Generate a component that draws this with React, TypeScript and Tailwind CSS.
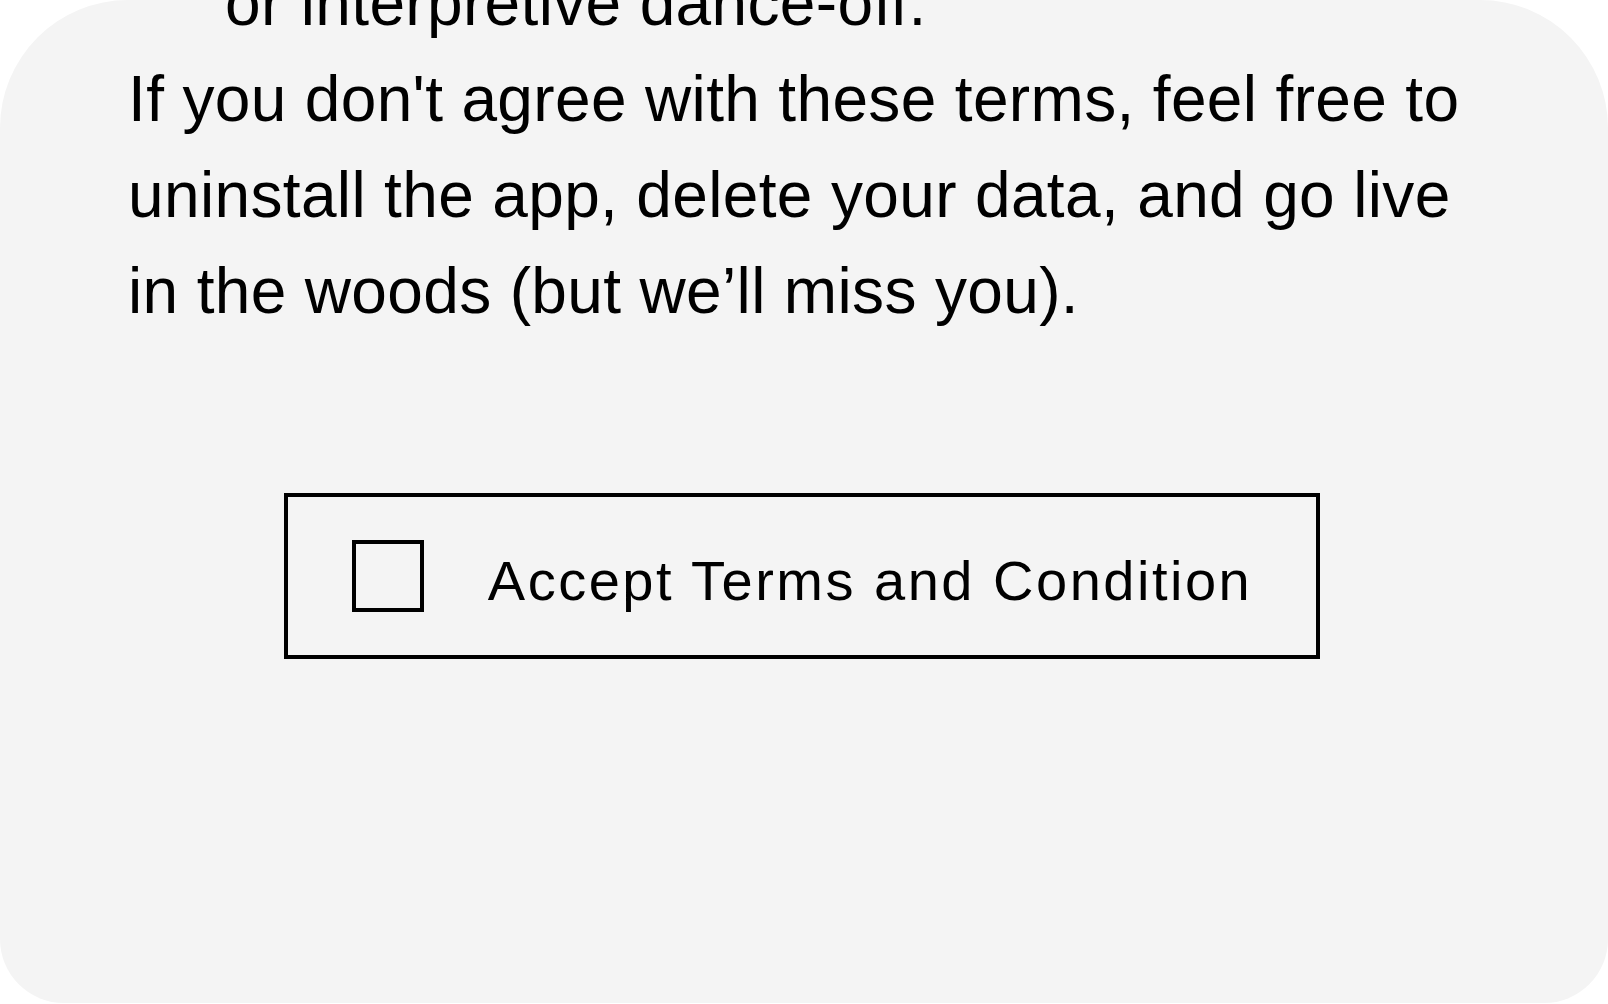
import { useState } from "react";

export default function App() {
  const [accepted, setAccepted] = useState(false);
  return (
    <div className="min-h-screen bg-white">
      {/* terms card, scrolled to the end */}
      <div className="h-[1003px] overflow-hidden rounded-t-[128px] rounded-b-[64px] bg-[#f4f4f4] px-[128px] font-['Liberation_Sans',Arial,sans-serif] text-black">
        <ul className="-mt-[45px] pl-[97px] text-[64px] leading-[96px] tracking-[0.35px]">
          <li>or interpretive dance-off.</li>
        </ul>
        <p className="text-[64px] leading-[96px] tracking-[0.35px]">
          If you don't agree with these terms, feel free to uninstall the app, delete your data,
          and go live in the woods (but we’ll miss you).
        </p>

        <div className="mt-[154px] flex justify-center pr-[4px]">
          <label className="flex h-[166px] cursor-pointer items-center gap-[64px] border-4 border-black px-[64px]">
            <input
              type="checkbox"
              checked={accepted}
              onChange={(e) => setAccepted(e.target.checked)}
              className="h-[72px] w-[72px] shrink-0 appearance-none border-4 border-black bg-transparent checked:bg-black"
            />
            <span className="mt-[9px] text-[56px] leading-none tracking-[2.5px]">
              Accept Terms and Condition
            </span>
          </label>
        </div>
      </div>
    </div>
  );
}
